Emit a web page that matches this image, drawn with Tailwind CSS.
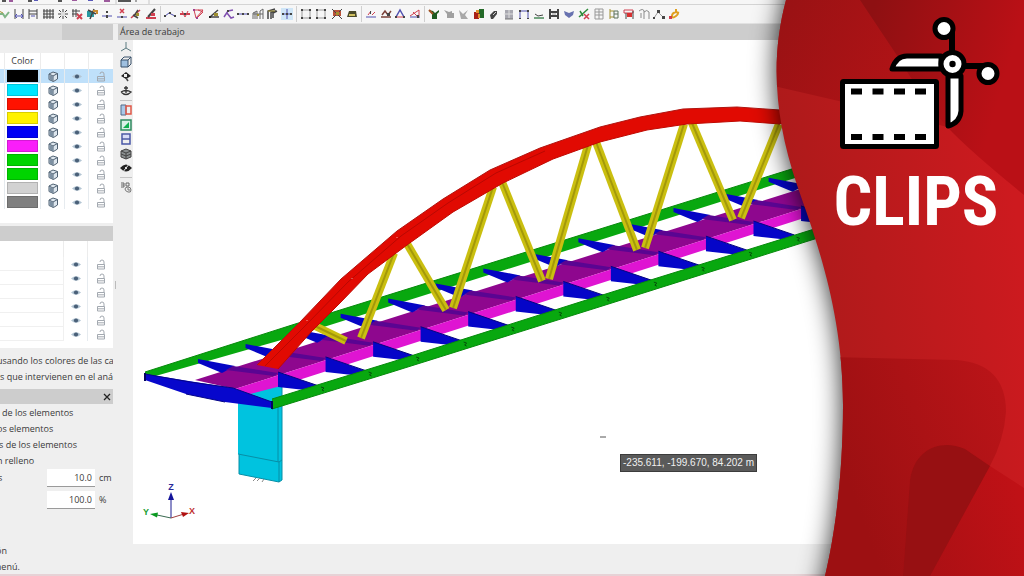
<!DOCTYPE html>
<html lang="es">
<head>
<meta charset="utf-8">
<title>Área de trabajo</title>
<script src="https://cdn.jsdelivr.net/npm/@tailwindcss/browser@4"></script>
</head>
<body class="relative flex h-screen flex-col overflow-hidden bg-[#efefef] font-['Open_Sans',sans-serif] text-[9px] leading-4 text-[#3a3a3a]">

<svg class="hidden">
  <symbol id="cube" viewBox="0 0 12 12"><path d="M2 3.500 6 1.500l4.500 1.500v5.500L6.500 11 2 9z" fill="#dde6ee" stroke="#4f6172"/><path d="M2 3.500 6 5.500l4.500-2.500M6 5.500V11" fill="none" stroke="#4f6172"/><path d="M2.500 4.300 6 6v4.500L2.500 9z" fill="#7d90a2"/></symbol>
  <symbol id="eye" viewBox="0 0 12 12"><path d="M1 6Q6 1.500 11 6 6 10.500 1 6z" fill="#b4c6d4"/><circle cx="6" cy="6" r="2.100" fill="#4a6078"/></symbol>
  <symbol id="lock" viewBox="0 0 12 12"><path d="M2.500 6h7v4.500h-7zM5 3.500Q5 1.500 7 1.500T9 3.500V6M3 8.300h6" fill="none" stroke="#a3a9b0"/></symbol>
</svg>

<header class="shrink-0 border-b border-[#e2e2e2] bg-[#f6f6f6]">
  <div class="h-[5px] border-b border-[#d4d4d4]">
    <svg class="block" width="160" height="4" viewBox="0 0 160 4"><path d="M2 1h4M28 1h4M58 1h4M119 0v1h11V0" fill="none" stroke="#555" stroke-width="2"/><path d="M9 1h4M72 0h5M104 1h6" stroke="#9c5a9c" stroke-width="2"/><path d="M34 0h4M88 0h5" stroke="#5858b8" stroke-width="2"/><path d="M136 0v2" stroke="#555"/><path d="M116 0v4M149 0v4" stroke="#c8c8c8"/></svg>
  </div>
  <nav id="tools" aria-label="Herramientas" class="-ml-[2px] flex h-[18px] items-center gap-[3px]"></nav>
</header>

<main class="flex min-h-0 flex-1">
  <section aria-label="Capas" class="flex w-[113px] shrink-0 flex-col overflow-hidden whitespace-nowrap">
    <div class="flex h-4 shrink-0 bg-[#dcdcdc]"><div class="ml-auto w-[51px] bg-[#cdcdcd]"></div></div>
    <div class="h-[13px] shrink-0"></div>
    <div class="h-[170px] shrink-0 bg-white">
      <table class="w-full table-fixed border-separate border-spacing-0">
        <colgroup><col class="w-[5px]"><col class="w-9"><col class="w-6"><col class="w-6"><col></colgroup>
        <thead><tr class="h-4"><th class="border-r border-[#ececec] p-0"></th><th class="border-r border-[#ececec] p-0 font-normal leading-4">Color</th><th class="border-r border-[#ececec] p-0"></th><th class="border-r border-[#ececec] p-0"></th><th class="p-0"></th></tr></thead>
        <tbody id="layers"></tbody>
      </table>
    </div>
    <div class="h-[3px] shrink-0"></div>
    <div class="h-[15px] shrink-0 bg-[#cdcdcd]"></div>
    <div class="h-[107px] shrink-0 bg-white">
      <table class="w-full table-fixed border-separate border-spacing-0">
        <colgroup><col class="w-16"><col class="w-6"><col></colgroup>
        <tbody id="groups"><tr class="h-4"><td class="border-r border-[#ececec] p-0"></td><td class="border-r border-[#ececec] p-0"></td><td class="p-0"></td></tr></tbody>
      </table>
    </div>
    <div class="h-[41px] shrink-0 pt-[5px]">
      <p class="-ml-[3px]">usando los colores de las cap</p>
      <p>s que intervienen en el anális</p>
    </div>
    <div class="flex h-[15px] shrink-0 items-center justify-end bg-[#cdcdcd] pr-[2px]">
      <button aria-label="Cerrar" class="flex size-2"><svg viewBox="0 0 8 8" class="size-2"><path d="M1 1l6 6M7 1 1 7" stroke="#222" stroke-width="1.300"/></svg></button>
    </div>
    <div class="shrink-0 pt-px">
      <p class="pl-[2px]">de los elementos</p>
      <p class="-ml-[3px]">os elementos</p>
      <p class="-ml-px">s de los elementos</p>
      <p class="-ml-[3px]">n relleno</p>
    </div>
    <label class="flex h-[18px] shrink-0 items-center"><span class="-ml-[2px] w-[49px]">s</span><input value="10.0" class="h-[18px] w-12 border-b border-[#9a9a9a] bg-white pr-[3px] text-right"><span class="pl-1">cm</span></label>
    <label class="mt-1 flex h-[18px] shrink-0 items-center"><span class="-ml-[2px] w-[49px]"></span><input value="100.0" aria-label="Porcentaje" class="h-[18px] w-12 border-b border-[#9a9a9a] bg-white pr-[3px] text-right"><span class="pl-1">%</span></label>
    <div class="-mb-px mt-auto">
      <p class="-ml-1">ón</p>
      <p class="-ml-[7px]">menú.</p>
    </div>
  </section>

  <div class="flex w-[5px] shrink-0 items-center justify-center"><div class="mb-[28px] h-2 w-px bg-[#bbb]"></div></div>

  <section aria-label="Área de trabajo" class="flex min-w-0 flex-1 flex-col">
    <h2 class="h-4 shrink-0 bg-[#cdcdcd] pl-[2px]">Área de trabajo</h2>
    <div class="flex min-h-0 flex-1">
      <nav id="views" aria-label="Vistas" class="flex w-[15px] shrink-0 flex-col items-center gap-[3px] pt-px"></nav>
      <div class="relative mb-[30px] min-w-0 flex-1 bg-white">
        <svg id="scene" class="block h-full w-full" viewBox="133 40 891 504" preserveAspectRatio="xMinYMin slice">
          <defs>
            <g id="beam">
              <path d="M-80-16-43-9-56-2-80-12z" fill="#0505c4"/>
              <path d="M-45-9 0-2-4 1-52-5z" fill="#5a0592"/>
              <path d="M0-3 41 11 36 16 0 12z" fill="#0505c8"/>
              <path d="M0-3 41 11" stroke="#040480"/>
            </g>
          </defs>
          <!-- pier -->
          <path d="M238 390 282 378V459L282 480 279 482 239 474V455L238 454z" fill="#00c3df"/>
          <path d="M238 454 279 462 282 460M279 462V482M278 400V462M239 455V474L279 482 282 480V385" fill="none" stroke="#078ea6"/>
          <path d="M253 481l3-3M257 481l3-3M262 482l2-3" stroke="#888"/>
          <!-- deck -->
          <path d="M145 372 292 325 600 229 830 157V167L600 240 292 337 145 379z" fill="#08a80f"/>
          <path d="M145 372 292 325 600 229 830 157" fill="none" stroke="#068a0b"/>
          <path d="M195 380 797 190 860 170V191L801 209 235 389z" fill="#8e078e"/>
          <path d="M235 389 801 209 860 190V200L801 219 277 387 250 394z" fill="#df14d2"/>
          <g id="beams"></g>
          <path d="M272 399 395 361 580 302 840 221V231L580 313 395 371 272 409z" fill="#08a80f"/>
          <path d="M272 399 395 361 580 302 840 221M272 409 395 371 580 313 840 231" fill="none" stroke="#068a0b"/>
          <g id="joints"></g>
          <path d="M145 374 195 382 233 388 272 402V408L225 402 186 394 145 380z" fill="#0707cc"/>
          <path d="M145 374 190 382 233 388 272 402M186 394 225 402" fill="none" stroke="#040488"/>
          <path d="M145 373v8M272 401v8" stroke="#040460" stroke-width="2"/>
          <!-- hangers -->
          <g id="hangers"></g>
          <!-- arch -->
          <path d="M257 365 300 322 322 299 341 279 397 231 443 199 490 170 540 148 600 127 640 117 683 109 737 107 780 110 820 115V130L780 124 740 121 687 124 647 130 600 142 553 159 503 183 453 212 407 245 368 274 340 303 312 331 278 369z" fill="#e10a02"/>
          <path d="M278 369 312 331 340 303 368 274 407 245 453 212 503 183 553 159 600 142 647 130 687 124 740 121 780 124" fill="none" stroke="#c00800"/>
          <path d="M265 366 305 326 348 282 401 236 448 203 496 173 545 151" fill="none" stroke="#b90802"/>
          <path d="M257 365 300 322 341 279 397 231 443 199 490 170 540 148 600 127 640 117 683 109 737 107 780 110" fill="none" stroke="#b01410"/>
          <path d="M397 237v1M352 278v1M490 168v1M307 320v1" stroke="#fff" stroke-opacity=".6"/>
          <!-- axes -->
          <path d="M171 518V498" stroke="#1a1a90"/><path d="M171 492l3 8h-6z" fill="#14149a"/>
          <path d="M171 518 157 515" stroke="#3a6a50"/><path d="M150 514l8-1.500-1 5z" fill="#0a9a20"/>
          <path d="M171 518 184 514" stroke="#a04040"/><path d="M189 513l-8-1 2 5z" fill="#b01010"/>
          <g font-family="Liberation Sans, sans-serif" font-size="9" font-weight="700" text-anchor="middle"><text x="171" y="490" fill="#2a2a9a">Z</text><text x="146" y="515" fill="#18a030">Y</text><text x="192" y="514" fill="#c03030">X</text></g>
          <path d="M600 437h6" stroke="#555"/>
        </svg>
        <div class="absolute left-[487px] top-[414px] flex h-[18px] w-[137px] items-center justify-center whitespace-nowrap border border-[#3c3c3c] bg-[#5a5a5a] font-['Liberation_Sans',sans-serif] text-[10px] text-[#f0f0f0]">-235.611, -199.670, 84.202 m</div>
      </div>
    </div>
  </section>
</main>
<div class="h-[2px] shrink-0 bg-[#e6d2d6]"></div>

<aside class="absolute inset-y-0 right-0 w-[294px]">
  <svg class="absolute inset-0 h-full w-full" viewBox="730 0 294 576" preserveAspectRatio="xMaxYMin slice">
    <defs>
      <linearGradient id="base" x1="780" x2="1024" y1="300" y2="260" gradientUnits="userSpaceOnUse"><stop offset="0" stop-color="#aa1a1a"/><stop offset="1" stop-color="#cd1a1f"/></linearGradient>
      <linearGradient id="topA" x1="780" x2="900" y1="20" y2="80" gradientUnits="userSpaceOnUse"><stop offset="0" stop-color="#9a1214"/><stop offset="1" stop-color="#b01316"/></linearGradient>
      <linearGradient id="topB" x1="870" x2="1010" y1="20" y2="60" gradientUnits="userSpaceOnUse"><stop offset="0" stop-color="#8e1012"/><stop offset="1" stop-color="#ba1016"/></linearGradient>
      <linearGradient id="lowA" x1="840" x2="1005" y1="460" y2="400" gradientUnits="userSpaceOnUse"><stop offset="0" stop-color="#9d1012"/><stop offset="1" stop-color="#b91418"/></linearGradient>
      <linearGradient id="lowB" x1="900" x2="1024" y1="540" y2="500" gradientUnits="userSpaceOnUse"><stop offset="0" stop-color="#a81014"/><stop offset="1" stop-color="#c01116"/></linearGradient>
      <filter id="soft" x="-30%" y="-10%" width="160%" height="120%"><feGaussianBlur stdDeviation="13"/></filter>
      <path id="edge" d="M786 0C770 60 775 120 797 185 815 237 843 310 843 405 843 470 836 530 825 576H1024V0z"/>
      <clipPath id="panel"><use href="#edge"/></clipPath>
    </defs>
    <path d="M792-40 786 0C770 60 775 120 797 185 815 237 843 310 843 405 843 470 836 530 825 576L815 620H1060V-40z" fill="#000" fill-opacity=".85" filter="url(#soft)"/>
    <g clip-path="url(#panel)">
      <path d="M730 0h294v576H730z" fill="url(#base)"/>
      <path d="M770 85 843 102 960 130 900 0H770z" fill="url(#topA)"/>
      <path d="M860 0 898 57Q930 110 953 133T1024 195V0z" fill="url(#topB)"/>
      <path d="M830 357 957 360Q1006 364 1006 412 1004 440 990 466L930 576H820z" fill="url(#lowA)"/>
      <path d="M903 576 910 480C914 450 940 438 965 449L990 466 1024 488V576z" fill="url(#lowB)"/>
      <path d="M903 576 910 480C914 450 940 438 965 449L990 466 930 576z" fill="#971012"/>
    </g>
  </svg>
  <div class="relative ml-auto flex w-[216px] flex-col items-center pt-[14px]">
    <svg class="h-[140px] w-[168px]" viewBox="832 14 168 140">
      <rect x="842.500" y="81.500" width="94" height="65" rx="1" fill="#fff" stroke="#000" stroke-width="5"/>
      <path d="M851 91.500h11M872.500 91.500h11M894 91.500h11M915 91.500h11M851 137h11M872.500 137h11M894 137h11M915 137h11" stroke="#000" stroke-width="6"/>
      <path d="M952 32v26M958 66h26" stroke="#000" stroke-width="6"/>
      <path d="M892 69Q896 56 907 56L941 56V69z" fill="#fff" stroke="#000" stroke-width="5" stroke-linejoin="round"/>
      <path d="M948 76H961V111Q960 123 948 126z" fill="#fff" stroke="#000" stroke-width="5" stroke-linejoin="round"/>
      <circle cx="952.500" cy="64" r="11.500" fill="#fff" stroke="#000" stroke-width="5"/><circle cx="952.500" cy="64" r="3.200"/>
      <circle cx="944" cy="28.500" r="9" fill="#fff" stroke="#000" stroke-width="5"/>
      <circle cx="988" cy="73.500" r="9" fill="#fff" stroke="#000" stroke-width="5"/>
    </svg>
    <h1 class="mt-3 font-['Roboto_Condensed','Liberation_Sans_Narrow',Roboto,sans-serif] text-[68px] font-bold leading-[72px] text-white">CLIPS</h1>
  </div>
</aside>

<script>
const P = (d, c, w = 1) => `<path d="${d}" fill="none" stroke="${c}" stroke-width="${w}"/>`;
const F = (d, c) => `<path d="${d}" fill="${c}"/>`;
const K = '#444', B = '#5050b0', R = '#d04050', G = '#2f8a3a', Y = '#a09030';
const groups = [
  [P('M1 6h4l2 3 4-5', '#7fb586', 2) + P('M1 3l4 2', Y),
   P('M2 1v10M10 1v10', K) + P('M2 8h8M4 6L2 8l2 2M8 6l2 2-2 2', B),
   P('M2 1v10M10 1v10M2 3h8M2 6h8', K) + P('M4 8h4', B),
   P('M2 1v10M5 1v10M8 1v10M11 1v10M1 3h11M1 6h11M1 9h11', K),
   P('M2 2l8 8M10 2l-8 8M1 6h10M6 1v10', K) + F('M4 4h4v4H4z', '#ddd'),
   P('M2 1v8M5 1v8M1 3h8M1 6h6', K) + P('M6 6l5 5M11 6l-5 5', R, 2),
   F('M1 3h7v6H1z', '#2a98a0') + P('M8 1l-4 10M2 2l8 4', K, 1.5) + P('M7 3h4v3', '#c88a30', 2),
   P('M1 8h10', B) + F('M5 7h2v3H5zM5 3h2v2H5z', K),
   P('M1 9h10', B) + P('M4 1l4 4M8 1L4 5', R, 1.5) + F('M5 8h2v2H5z', K),
   P('M1 10l9-8', R, 1.5) + P('M3 7l5 3M8 2L4 8', K, 1.5) + F('M6 5h3v3H6z', Y),
   P('M1 10h10', R, 2) + P('M10 1L3 9', K, 2) + F('M6 5h4v3H6z', R)],
  [P('M1 8l4-3 6 3', B) + F('M0 7h2v2H0zM5 4h2v2H5zM10 7h2v2h-2z', K),
   P('M1 6h10', R, 2) + P('M3 3l3 6 3-6', R) + F('M5 5h2v2H5z', K),
   P('M1 2h9L3 10zM5 2l5 2-6 6', R) + F('M0 1h2v2H0zM3 9h2v2H3z', '#a04090'),
   P('M1 9h10M2 9l8-7', K, 1.5) + F('M6 5h4v3H6z', Y) + F('M1 8h2v2H1z', '#222'),
   P('M1 9l4-6 5-1M4 5l4 5 3-1', '#8050b0', 1.5) + F('M4 2h2v2H4z', K),
   P('M1 6h10', B) + F('M0 5h2v2H0zM5 5h2v2H5zM10 5h2v2h-2z', K),
   P('M1 11V5l4-2v8M8 11V3l3-2v10M1 6h10M3 4v7', '#666') + F('M5 6h2v2H5z', Y),
   P('M2 11V3l7-2M5 11V4l5-1M7 10V5l4-2', K, 1.5) + P('M2 3h7', Y),
   P('M1 6h10M6 1v10', B) + F('M1 5h2v2H1zM9 5h2v2H9zM5 5h2v2H5z', K)],
  [P('M2 2h8v8H2z', '#9a9a9a') + F('M1 1h2v2H1zM9 1h2v2H9zM1 9h2v2H1zM9 9h2v2H9z', K),
   P('M2 2h8v8H2z', '#9a9a9a') + F('M1 1h2v2H1zM9 1h2v2H9zM1 9h2v2H1zM9 9h2v2H9z', K),
   F('M2 2h8v6H2z', '#b85038') + P('M1 1l10 10M11 1L1 11', K) + F('M5 4h3v3H5z', Y),
   F('M3 3h7l1 6H1z', '#4a4a2a') + F('M3 6h6v2H3z', '#d0c060')],
  [P('M1 9h10', B) + P('M3 7l3-4M7 7l3-3', R) + F('M5 3h1v3H5z', K),
   P('M1 9h10M2 7l3-4 3 4 3-4', '#7a4038', 1.5) + F('M7 5h3v3H7z', K),
   P('M2 9l4-7 4 7', B, 1.5) + P('M1 9h10', R) + F('M1 8h2v2H1zM9 8h2v2H9z', K),
   P('M1 9h10', B) + P('M1 8l9-6v6M4 4l5 5', R) + F('M8 7h2v3H8z', K)],
  [F('M1 2l4 1 2 2 4-3v2L9 6v5H4V6z', '#1d5a20') + P('M1 2l4 4', '#a05020', 2),
   F('M1 2l5 2 3-1v2h2v5H4V6z', '#a0a0a0'),
   F('M1 2l4 4 5-4-3 5 3 4H3z', '#a8a8a8'),
   F('M1 4h5v7H1z', '#a82018') + F('M6 1h5v9H6z', '#246a28') + F('M3 2h3v3H3zM5 6h2v4H5z', '#e09030'),
   F('M2 7l4-4h3v3L5 11H3z', '#444') + P('M5 7l3-3', '#ccc'),
   F('M2 2h8v9H2z', '#a8a8b0') + P('M1 6h9M6 2v8', '#ddd') + P('M2 11h8', '#777'),
   P('M2 11V3h8v8', B) + F('M1 2h2v2H1zM9 2h2v2H9zM1 10h2v1H1zM9 10h2v1H9z', K),
   P('M1 10h10', '#4a8a5a', 1.5) + P('M2 6l3 2 5-1', K),
   P('M2 1v10M10 1v10M2 4h8M2 8h8', K, 2) + F('M4 5h4v2H4z', '#c8c8c8'),
   F('M1 3l5 2 5-2-1 4-4 3-4-3z', '#6872b0'),
   P('M1 9l9-8M2 3l3 5', G, 1.5) + P('M6 6l5 5M11 6l-5 5', R, 1.5),
   P('M2 1h8v10H2zM2 4h8M2 7h8M6 1v10', '#999'),
   P('M2 1v10M2 3h4M2 9h4', Y) + P('M6 3h4v7H6zM6 6h4', '#5a705a'),
   P('M1 2h9v3H1z', R) + P('M3 5v6M10 3v8', K) + F('M4 5h5v4H4z', '#d83030'),
   P('M1 3q4-3 5 0v8M6 4q3-3 5 0v7M3 5v5', '#8a8a8a'),
   P('M1 10l4-6 5 5', '#999') + F('M4 2h3v3H4zM9 8h3v3H9zM0 9h2v2H0z', K),
   P('M8 1v3q-4 1-4 4t4 0 0-4l3 1', '#e0a020', 2) + F('M1 8h3v3H1z', R)]
];
const widths = ['w-[159px]', 'w-[129px]', 'w-[58px]', 'w-[56px]', 'w-[252px]'];
const button = body => `<button class="size-3 shrink-0"><svg viewBox="0 0 12 12" class="block size-3">${body}</svg></button>`;
document.getElementById('tools').innerHTML = groups.map((g, i) =>
  `<div class="flex shrink-0 justify-between ${widths[i]}">${g.map(button).join('')}</div>`
).join('<div class="h-4 w-px shrink-0 bg-[#cfcfcf]"></div>');
document.querySelectorAll('#tools > div')[2].lastElementChild.classList.add('bg-[#cfe6f7]');

const views = [
  [P('M6 1v6L1 10M6 7l5 3', '#5a7a80'),
   F('M1 4h7v7H1z', '#9fc0e0') + P('M1 4h7v7H1zM1 4l3-3h7v7l-3 3M8 4l3-3', '#38506a'),
   F('M1 6l5-4 5 4-5 3z', '#222') + F('M4 4h3v3H4z', '#eee') + P('M6 8l2 3', K, 1.5),
   P('M1 7q5-3 10 0-5 5-10 0M6 1v7M4 3h4', '#333', 1.3)],
  [F('M1 1h5v10H1z', '#a8c8e8') + P('M1 1h5v10H1z', '#506a8a') + P('M6 2h5v8H6z', '#e05848', 1.5),
   F('M1 1h10v10H1z', '#d8f0e8') + P('M1 1h10v10H1z', '#308a60', 1.5) + F('M3 9l6-6v6z', '#10b050'),
   P('M2 1h8v10H2zM2 6h8', '#4a58a8', 1.5) + F('M3 2h6v3H3z', '#d8dcf8'),
   F('M1 3l5-2 5 2v6l-5 2-5-2z', '#8a8f90') + P('M1 3l5 2 5-2M6 5v6M1 6l5 2 5-2M1 3v6l5 2 5-2V3L6 1z', K),
   F('M0 6q6-7 12 0-6 7-12 0z', '#222') + P('M2 11L10 1', '#eee') + F('M5 5h2v2H5z', '#ddd')],
  [P('M1 2h3v4H1M1 4h3M6 2h3v3H6z', '#666') + P('M5 8q0-2 3-2t3 3-3 2-3-3M8 7v2h2', '#777')]
];
const vh = ['h-[56px]', 'h-[70px]', 'h-3'];
document.getElementById('views').innerHTML = views.map((g, i) =>
  `<div class="flex shrink-0 flex-col justify-between ${vh[i]}">${g.map(button).join('')}</div>`
).join('<div class="h-px w-3 shrink-0 bg-[#c4c4c4]"></div>');

const cell = (id, last) => `<td class="p-0 ${last ? '' : 'border-r border-[#e6ebef]'}"><button class="mx-auto block h-[13px] w-3"><svg class="block h-[13px] w-3"><use href="#${id}"/></svg></button></td>`;
document.getElementById('layers').innerHTML =
  ['#000000', '#00e5ff', '#ff1200', '#fff200', '#0000f5', '#fa1efa', '#00d400', '#00d400', '#d2d2d2', '#808080'].map((c, i) =>
    `<tr class="h-[14px] ${i ? '' : 'bg-[#bfe0fa]'}"><td class="border-r border-[#e6ebef] p-0"></td><td class="border-r border-[#e6ebef] p-0"><div class="mx-auto h-3 w-[31px] border border-black/15" style="background:${c}"></div></td>${cell('cube')}${cell('eye')}${cell('lock', 1)}</tr>`).join('');
document.getElementById('groups').innerHTML +=
  `<tr class="h-[14px]"><td class="border-b border-r border-[#f0f0f0] p-0"></td>${cell('eye')}${cell('lock', 1)}</tr>`.repeat(6);

const stations = Array.from({length: 13}, (_, k) => 278 + k * 47.55);
document.getElementById('beams').innerHTML = stations.map(x =>
  `<use href="#beam" x="${x}" y="${375 - (x - 278) * 0.3175}"/>`).join('');
document.getElementById('joints').innerHTML = stations.map(x =>
  `<path d="M${x + 43} ${387 - (x - 278) * 0.315}l3 1-2 2 2 1" fill="none" stroke="#04500a"/>`).join('');
document.getElementById('hangers').innerHTML = [
  [315, 326, 346, 341], [394, 253, 361, 338], [406, 242, 446, 310], [493, 187, 453, 308], [502, 182, 542, 281],
  [588, 145, 549, 279], [596, 142, 637, 250], [684, 124, 645, 248], [692, 123, 733, 220], [779, 124, 741, 218]
].map(([a, b, c, d]) => `<path d="M${a} ${b}L${c} ${d}" stroke="#cabf10" stroke-width="8"/><path d="M${a} ${b}L${c} ${d}" stroke="#a3980a" stroke-width="2"/>`).join('');
</script>
</body>
</html>
